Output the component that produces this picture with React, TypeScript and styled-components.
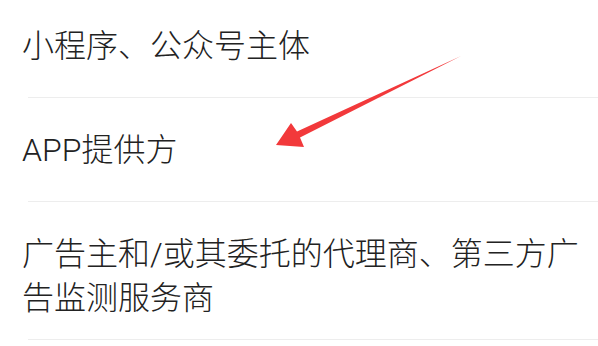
import React from "react";
import styled, { createGlobalStyle } from "styled-components";

const Global = createGlobalStyle`
  html, body {
    margin: 0;
    padding: 0;
    background: #ffffff;
    overflow: hidden;
  }
  * { box-sizing: border-box; }
`;

const Screen = styled.div`
  position: relative;
  width: 598px;
  height: 346px;
  overflow: hidden;
  background: #ffffff;
  font-family: "Roboto", "Noto Sans CJK SC", sans-serif;
`;

const List = styled.ul`
  list-style: none;
  margin: -6px 0 0 0;
  padding: 0;
  display: flex;
  flex-direction: column;
`;

const Row = styled.li`
  min-height: 104px;
  padding: 30px 14px 20px 22px;
  font-size: 32px;
  line-height: 44px;
  color: #222222;
  font-weight: 300;
  background: linear-gradient(#ededed, #ededed) no-repeat right bottom / calc(100% - 28px) 1px;
`;

const Arrow = styled.svg`
  position: absolute;
  left: 0;
  top: 0;
  pointer-events: none;
`;

const items = [
  "小程序、公众号主体",
  "APP提供方",
  "广告主和/或其委托的代理商、第三方广告监测服务商",
];

export default function App() {
  return (
    <>
      <Global />
      <Screen>
        <List>
          {items.map((t) => (
            <Row key={t}>{t}</Row>
          ))}
        </List>
        <Arrow width="598" height="346" viewBox="0 0 598 346">
          <polygon
            points="276,145 291,123 297,131.5 461,56 300,137.5 304,147"
            fill="#f2393b"
          />
        </Arrow>
      </Screen>
    </>
  );
}
